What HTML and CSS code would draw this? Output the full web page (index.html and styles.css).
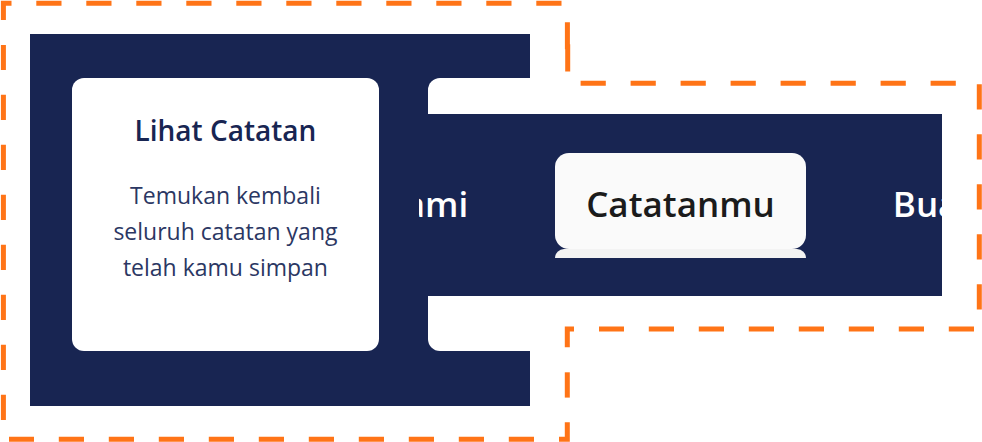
FILE: index.html
```html
<!DOCTYPE html>
<html lang="id">
<head>
<meta charset="utf-8">
<meta name="viewport" content="width=device-width, initial-scale=1">
<title>Catatanmu</title>
<link rel="stylesheet" href="styles.css">
</head>
<body>
<main class="stage">
  <svg class="outline" viewBox="0 0 982 442" preserveAspectRatio="none" aria-hidden="true">
    <g class="solid">
      <path d="M3.4 20V3.3H11.5"/>
      <path d="M567.4 22.2V49.3M567.7 44.3V71.5"/>
      <path d="M574 329.1H567.3V347.3"/>
      <path d="M567.3 372.3V397.6"/>
      <path d="M567.3 422.2V439.2H559"/>
    </g>
    <g class="dashed">
      <path d="M36.3 3.3H562"/>
      <path d="M580.6 83.2H956"/>
      <path d="M979.3 84.3V309.6"/>
      <path d="M974 329.1H599"/>
      <path d="M534 439.2H9"/>
      <path d="M3.4 420V45"/>
    </g>
  </svg>
  <section class="panel">
    <article class="card">
      <h2 class="card-title">Lihat Catatan</h2>
      <p class="card-text">Temukan kembali seluruh catatan yang telah kamu simpan</p>
    </article>
    <article class="card"></article>
  </section>
  <nav class="nav">
    <a class="link link-before" href="#">ami</a>
    <div class="current">
      <a class="tab" href="#" aria-current="page">Catatanmu</a>
      <span class="shelf"></span>
    </div>
    <a class="link" href="#">Bua</a>
  </nav>
</main>
</body>
</html>
```
FILE: styles.css
```css
* {
  box-sizing: border-box;
}

body {
  margin: 0;
  background: #fff;
  font-family: "Open Sans", "Noto Sans", sans-serif;
}

/* The panel and the nav share the middle column, where the nav lies on top. */
.stage {
  position: relative;
  display: grid;
  grid-template-columns: 389fr 111fr 412fr;
  align-items: center;
  padding: 34px 40px 36px 30px;
}

.outline {
  position: absolute;
  inset: 0;
  width: 100%;
  height: 100%;
  fill: none;
  stroke: #ff7417;
  stroke-width: 5;
}

.dashed {
  stroke-dasharray: 25.2 24.8;
}

.panel {
  grid-area: 1 / 1 / 2 / 3;
  display: flex;
  gap: 49px;
  padding: 44px 0 55px 42px;
  overflow: hidden;
  background: #182552;
}

.card {
  flex: 0 0 67%;
  padding: 34px 32px 66px;
  border-radius: 12px;
  background: #fff;
  color: #182552;
  text-align: center;
}

.card-title {
  margin: 0 0 29px;
  font-size: 28px;
  font-weight: 600;
  line-height: 36px;
}

.card-text {
  margin: 0;
  color: #2b3763;
  font-size: 23px;
  line-height: 36px;
}

.nav {
  grid-area: 1 / 2 / 2 / 4;
  align-self: start;
  display: grid;
  grid-template-columns: minmax(0, 1fr) auto minmax(0, 1fr);
  gap: 87px;
  margin-top: 80px;
  padding: 39px 0 38px;
  overflow: hidden;
  background: #182552;
  font-size: 35px;
  font-weight: 600;
  line-height: 90px;
  white-space: nowrap;
}

.link {
  padding-top: 6px;
  color: #fff;
  text-decoration: none;
}

.link-before {
  justify-self: end;
}

.tab {
  display: block;
  padding: 6px 31px 0;
  border-radius: 14px;
  background: #fafafa;
  color: #1b1b1b;
  text-decoration: none;
}

.shelf {
  display: block;
  height: 9px;
  border-radius: 10px 10px 0 0;
  background: #f3f3f3;
}
```
